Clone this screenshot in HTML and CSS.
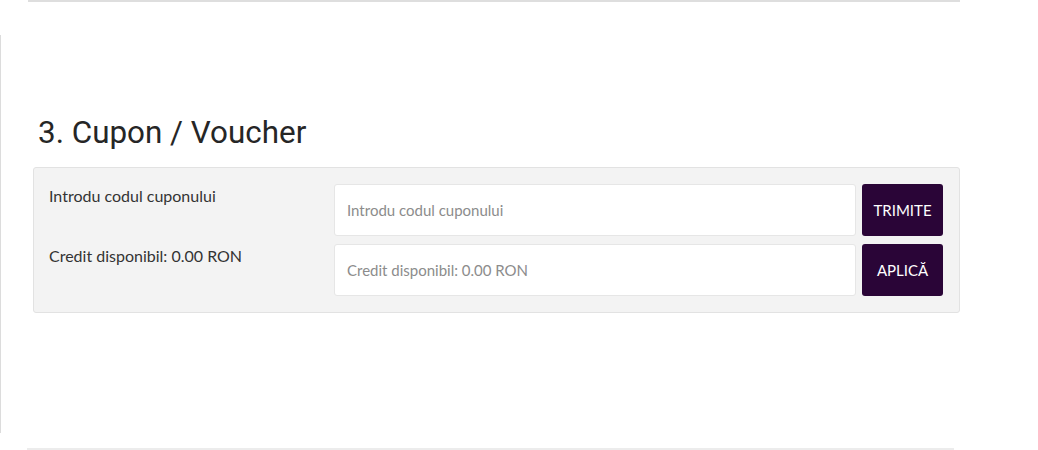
FILE: index.html
```html
<!DOCTYPE html>
<html lang="ro">
<head>
<meta charset="utf-8">
<title>Cupon / Voucher</title>
<link rel="stylesheet" href="styles.css">
</head>
<body>
<div class="top-rule"></div>
<div class="frame">
  <h2 class="section-title">3. Cupon / Voucher</h2>
  <div class="coupon-panel">
    <label class="field-label" for="coupon">Introdu codul cuponului</label>
    <input class="field-input" id="coupon" type="text" placeholder="Introdu codul cuponului">
    <button class="action-btn" type="button">TRIMITE</button>
    <label class="field-label" for="credit">Credit disponibil: 0.00 RON</label>
    <input class="field-input" id="credit" type="text" placeholder="Credit disponibil: 0.00 RON">
    <button class="action-btn" type="button">APLICĂ</button>
  </div>
</div>
<div class="bottom-rule"></div>
</body>
</html>
```
FILE: styles.css
```css
html, body {
  margin: 0;
  padding: 0;
  background: #ffffff;
}

body {
  width: 1038px;
  height: 450px;
  overflow: hidden;
  font-family: "Lato", "Noto Sans", sans-serif;
  color: #333333;
}

.top-rule {
  height: 2px;
  margin: 0 78px 0 28px;
  background: #dedede;
}

.frame {
  margin-top: 33px;
  height: 398px;
  border-left: 1px solid #dcdcdc;
  padding-left: 32px;
  box-sizing: border-box;
  display: flex;
  flex-direction: column;
  align-items: flex-start;
}

.section-title {
  margin: 79px 0 15px 5px;
  font-family: "Roboto", "Liberation Sans", sans-serif;
  font-weight: 400;
  font-size: 31.4px;
  line-height: 38px;
  color: #262626;
}

.coupon-panel {
  width: 927px;
  box-sizing: border-box;
  background: #f3f3f3;
  border: 1px solid #e2e2e2;
  border-radius: 3px;
  padding: 16px 16px 16px 15px;
  display: grid;
  grid-template-columns: 279px 522px 81px;
  grid-auto-rows: 52px;
  column-gap: 6px;
  row-gap: 8px;
}

.field-label {
  font-size: 16px;
  line-height: 22px;
  color: #333333;
  padding-top: 1px;
}

.field-input {
  box-sizing: border-box;
  height: 52px;
  width: 100%;
  margin: 0;
  border: 1px solid #e6e6e6;
  border-radius: 3px;
  background: #ffffff;
  padding: 0 12px;
  font-family: "Lato", "Noto Sans", sans-serif;
  font-size: 15px;
  color: #333333;
  outline: none;
}

.field-input::placeholder {
  color: #8c8c8c;
  opacity: 1;
}

.action-btn {
  box-sizing: border-box;
  height: 52px;
  width: 81px;
  margin: 0;
  border: none;
  border-radius: 3px;
  background: #2a0537;
  color: #ffffff;
  font-family: "Lato", "Noto Sans", sans-serif;
  font-size: 15px;
  padding: 0;
  cursor: pointer;
}

.bottom-rule {
  height: 2px;
  margin: 15px 84px 0 27px;
  background: #ececec;
}
```
